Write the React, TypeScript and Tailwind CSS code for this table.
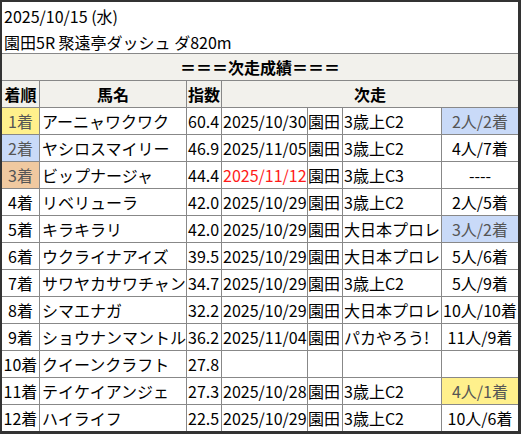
import React from "react";

type Row = {
  rank: string;
  rankBg?: string;
  name: string;
  score: string;
  date?: string;
  red?: boolean;
  place?: string;
  race?: string;
  result?: string;
  resultBg?: string;
};

const rows: Row[] = [
  { rank: "1着", rankBg: "bg-[#fff08c]", name: "アーニャワクワク", score: "60.4", date: "2025/10/30", place: "園田", race: "3歳上C2", result: "2人/2着", resultBg: "bg-[#c9daf8]" },
  { rank: "2着", rankBg: "bg-[#c9daf8]", name: "ヤシロスマイリー", score: "46.9", date: "2025/11/05", place: "園田", race: "3歳上C2", result: "4人/7着" },
  { rank: "3着", rankBg: "bg-[#f0c9a0]", name: "ビップナージャ", score: "44.4", date: "2025/11/12", red: true, place: "園田", race: "3歳上C3", result: "----" },
  { rank: "4着", name: "リベリューラ", score: "42.0", date: "2025/10/29", place: "園田", race: "3歳上C2", result: "2人/5着" },
  { rank: "5着", name: "キラキラリ", score: "42.0", date: "2025/10/29", place: "園田", race: "大日本プロレ", result: "3人/2着", resultBg: "bg-[#c9daf8]" },
  { rank: "6着", name: "ウクライナアイズ", score: "39.5", date: "2025/10/29", place: "園田", race: "大日本プロレ", result: "5人/6着" },
  { rank: "7着", name: "サワヤカサワチャン", score: "34.7", date: "2025/10/29", place: "園田", race: "3歳上C2", result: "5人/9着" },
  { rank: "8着", name: "シマエナガ", score: "32.2", date: "2025/10/29", place: "園田", race: "大日本プロレ", result: "10人/10着" },
  { rank: "9着", name: "ショウナンマントル", score: "36.2", date: "2025/11/04", place: "園田", race: "パカやろう!", result: "11人/9着" },
  { rank: "10着", name: "クイーンクラフト", score: "27.8" },
  { rank: "11着", name: "テイケイアンジェ", score: "27.3", date: "2025/10/28", place: "園田", race: "3歳上C2", result: "4人/1着", resultBg: "bg-[#fff08c]" },
  { rank: "12着", name: "ハイライフ", score: "22.5", date: "2025/10/29", place: "園田", race: "3歳上C2", result: "10人/6着" },
];

const cell = "h-[26px] leading-[26px] whitespace-nowrap overflow-hidden";

export default function App() {
  return (
    <div
      className="w-[521px] h-[434px] border-t-2 border-l-2 border-r-[3px] border-b-[3px] border-[#333] bg-[#888] text-[16px] text-black"
      style={{ fontFamily: '"Noto Sans CJK JP", "Noto Sans", sans-serif' }}
    >
      <div className="grid grid-cols-[37px_146px_34px_85px_34px_98px_76px] gap-px">
        {/* title */}
        <div className="col-span-7 h-[51px] bg-white pl-0.5 pt-px leading-[26px]">
          <div>2025/10/15 (水)</div>
          <div>園田5R 聚遠亭ダッシュ ダ820m</div>
        </div>

        <div className={`col-span-7 ${cell} bg-[#f2f1ec] text-center font-bold`}>
          ＝＝＝次走成績＝＝＝
        </div>

        <div className={`${cell} bg-[#f2f1ec] font-bold text-center`}>着順</div>
        <div className={`${cell} bg-[#f2f1ec] font-bold text-center`}>馬名</div>
        <div className={`${cell} bg-[#f2f1ec] font-bold text-center`}>指数</div>
        <div className={`col-span-4 ${cell} bg-[#f2f1ec] font-bold text-center`}>次走</div>

        {rows.map((r) => (
          <React.Fragment key={r.rank}>
            <div className={`${cell} text-center ${r.rankBg ? `${r.rankBg} text-[#555]` : "bg-white"}`}>{r.rank}</div>
            <div className={`${cell} bg-white pl-0.5`}>{r.name}</div>
            <div className={`${cell} bg-white pl-px`}>{r.score}</div>
            <div className={`${cell} bg-white pl-px ${r.red ? "text-[#ff1a1a]" : ""}`}>{r.date}</div>
            <div className={`${cell} bg-white`}>{r.place}</div>
            <div className={`${cell} bg-white pl-px`}>{r.race}</div>
            <div className={`${cell} text-center ${r.resultBg ? `${r.resultBg} text-[#555]` : "bg-white"}`}>{r.result}</div>
          </React.Fragment>
        ))}
      </div>
    </div>
  );
}
